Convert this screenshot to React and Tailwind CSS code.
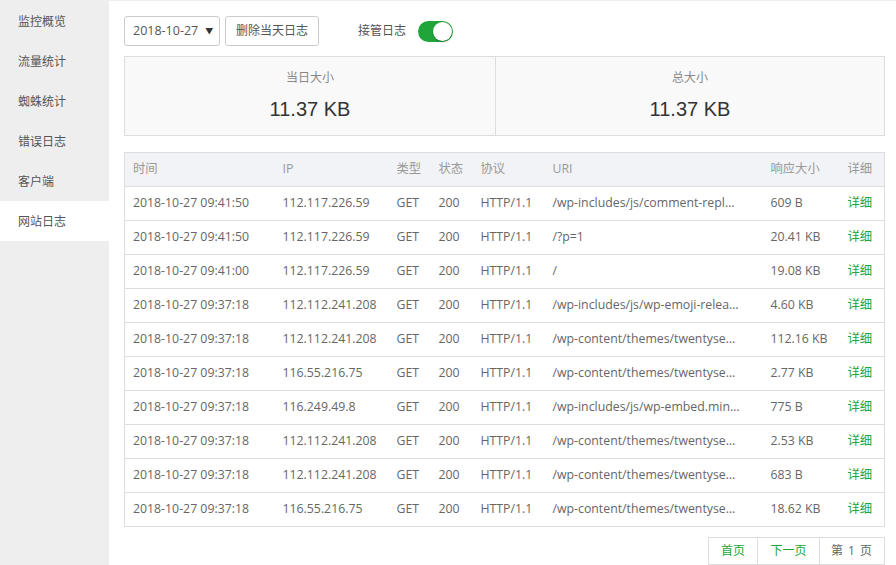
import React from "react";

const rows = [
  ["2018-10-27 09:41:50", "112.117.226.59", "/wp-includes/js/comment-reply.min.js", "609 B"],
  ["2018-10-27 09:41:50", "112.117.226.59", "/?p=1", "20.41 KB"],
  ["2018-10-27 09:41:00", "112.117.226.59", "/", "19.08 KB"],
  ["2018-10-27 09:37:18", "112.112.241.208", "/wp-includes/js/wp-emoji-release.min.js", "4.60 KB"],
  ["2018-10-27 09:37:18", "112.112.241.208", "/wp-content/themes/twentyseventeen/style.css", "112.16 KB"],
  ["2018-10-27 09:37:18", "116.55.216.75", "/wp-content/themes/twentyseventeen/a.js", "2.77 KB"],
  ["2018-10-27 09:37:18", "116.249.49.8", "/wp-includes/js/wp-embed.min.js", "775 B"],
  ["2018-10-27 09:37:18", "112.112.241.208", "/wp-content/themes/twentyseventeen/b.js", "2.53 KB"],
  ["2018-10-27 09:37:18", "112.112.241.208", "/wp-content/themes/twentyseventeen/c.js", "683 B"],
  ["2018-10-27 09:37:18", "116.55.216.75", "/wp-content/themes/twentyseventeen/d.js", "18.62 KB"],
];

const menu = ["监控概览", "流量统计", "蜘蛛统计", "错误日志", "客户端", "网站日志"];

export default function App() {
  return (
    <div
      className="flex w-[896px] h-[565px] overflow-hidden bg-white text-[#666]"
      style={{ fontFamily: '"Open Sans", "Noto Sans CJK SC", sans-serif' }}
    >
      <div className="w-[109px] shrink-0 bg-[#eeeeee] pt-[1px]">
        {menu.map((m, i) => (
          <div
            key={m}
            className={`h-10 flex items-center pl-[18px] pt-[2px] text-[12px] text-[#555] ${i === 5 ? "bg-white" : ""}`}
          >
            {m}
          </div>
        ))}
      </div>
      <div className="flex-1 border-t border-[#eeeeee] pl-[15px] pr-[12px] pt-[15px]">
        <div className="flex items-center h-[30px]">
          <div className="w-[96px] h-[30px] border border-[#cccccc] rounded-[3px] flex items-center pl-[8px] text-[12.5px] text-[#555]">
            2018-10-27
            <span className="ml-[7px] text-[8px] text-[#333]">▼</span>
          </div>
          <div className="ml-[5px] w-[94px] h-[30px] border border-[#cccccc] rounded-[3px] flex items-center justify-center text-[12px] text-[#555]">
            删除当天日志
          </div>
          <div className="ml-[39px] text-[12px] text-[#555]">接管日志</div>
          <div className="ml-[12px] w-[35px] h-[21px] rounded-full bg-[#20a53a] relative">
            <div className="absolute right-[1px] top-[1px] w-[19px] h-[19px] rounded-full bg-white shadow-[0_1px_2px_rgba(0,0,0,0.3)]" />
          </div>
        </div>
        <div className="mt-[10px] h-[80px] flex border border-[#dddddd] bg-[#f9f9f9]">
          <div className="w-[371px] shrink-0 flex flex-col items-center pt-[12px] border-r border-[#dddddd]">
            <div className="text-[12px] text-[#888]">当日大小</div>
            <div
              className="mt-[7px] text-[20px] text-[#333]"
              style={{ fontFamily: '"Liberation Sans", Arial, sans-serif' }}
            >
              11.37 KB
            </div>
          </div>
          <div className="flex-1 flex flex-col items-center pt-[12px]">
            <div className="text-[12px] text-[#888]">总大小</div>
            <div
              className="mt-[7px] text-[20px] text-[#333]"
              style={{ fontFamily: '"Liberation Sans", Arial, sans-serif' }}
            >
              11.37 KB
            </div>
          </div>
        </div>
        <table className="mt-[16px] w-full table-fixed border-collapse border border-[#dddddd] text-[12.3px]">
          <colgroup>
            <col className="w-[150px]" />
            <col className="w-[114px]" />
            <col className="w-[42px]" />
            <col className="w-[42px]" />
            <col className="w-[72px]" />
            <col className="w-[218px]" />
            <col className="w-[77px]" />
            <col className="w-[45px]" />
          </colgroup>
          <thead>
            <tr className="h-[34px] bg-[#f2f3f6] text-[#999]">
              {["时间", "IP", "类型", "状态", "协议", "URI", "响应大小", "详细"].map((h) => (
                <th key={h} className="text-left font-normal pl-[8px] border-b border-[#dddddd]">
                  {h}
                </th>
              ))}
            </tr>
          </thead>
          <tbody>
            {rows.map((r, i) => (
              <tr key={i} className="h-[34px] border-b border-[#dddddd]">
                <td className="pl-[8px] whitespace-nowrap">{r[0]}</td>
                <td className="pl-[8px] whitespace-nowrap">{r[1]}</td>
                <td className="pl-[8px]">GET</td>
                <td className="pl-[8px]">200</td>
                <td className="pl-[8px] whitespace-nowrap">HTTP/1.1</td>
                <td className="pl-[8px] pr-[22px] truncate">{r[2]}</td>
                <td className="pl-[8px] whitespace-nowrap">{r[3]}</td>
                <td className="pl-[8px] text-[#20a53a] whitespace-nowrap">详细</td>
              </tr>
            ))}
          </tbody>
        </table>
        <div className="mt-[10px] flex justify-end">
          <div className="flex h-[28px] border border-[#dddddd] text-[12px]">
            <div className="w-[49px] flex items-center justify-center text-[#20a53a] border-r border-[#dddddd]">首页</div>
            <div className="w-[62px] flex items-center justify-center text-[#20a53a] border-r border-[#dddddd]">下一页</div>
            <div className="w-[64px] flex items-center justify-center text-[#666] tracking-[1px]">第 1 页</div>
          </div>
        </div>
      </div>
    </div>
  );
}
